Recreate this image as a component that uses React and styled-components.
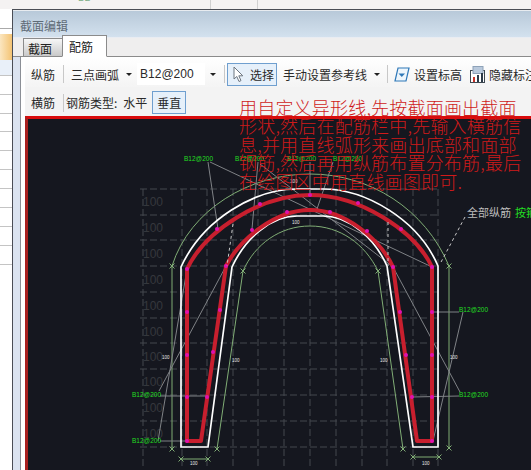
import React from 'react';
import styled, { createGlobalStyle } from 'styled-components';

const Global = createGlobalStyle`
  html, body { margin: 0; padding: 0; background: #fff; }
  body { font-family: "Noto Sans CJK SC", "Liberation Sans", sans-serif; }
  * { box-sizing: border-box; }
`;

const Desktop = styled.div`
  width: 531px; height: 470px; overflow: hidden; position: relative;
  display: flex; flex-direction: column; background: #fff;
`;
const TopStrip = styled.div`
  height: 9px; flex: none; display: flex; background: #f4f2f2; overflow: hidden;
`;
const TopCell = styled.div`
  width: ${p => p.$w}px; height: 9px; border-right: 1px solid ${p => p.$line || 'transparent'};
  font: 10px/1 "Liberation Sans", sans-serif; color: #7cae86; padding-left: ${p => p.$pad || 0}px;
  span { display: block; margin-top: -7px; }
`;
const Main = styled.div`flex: 1; display: flex; min-height: 0;`;
const Sheet = styled.div`width: 12px; flex: none; display: flex; flex-direction: column; background: #fff;`;
const SheetRow = styled.div`
  height: ${p => p.$h}px; flex: none; background: ${p => p.$bg || '#fff'};
  border-bottom: 1px solid ${p => p.$line || 'transparent'};
`;
const Win = styled.div`
  flex: 1; min-width: 0; display: flex; flex-direction: column;
  border-left: 1px solid #4a4d55; border-top: 1px solid #4a4d55; background: #dbe3f0;
`;
const TitleBar = styled.div`
  height: 27px; flex: none; padding: 3px 0 0 7px; border-top: 1px solid #e8ecf0;
  background: linear-gradient(#b8c9d9, #d3e1ee);
  font-size: 12px; line-height: 23px; color: #5f6b76;
`;
const TabStrip = styled.div`
  height: 20px; flex: none; display: flex; align-items: flex-end; padding-left: 10px; position: relative;
  background: #efeeee; border-bottom: 1px solid #8b8b8b; border-top: 1px solid #e9ecf2;
`;
const Tab = styled.div`
  height: ${p => p.$active ? 22 : 18}px; width: ${p => p.$active ? 45 : 39}px;
  margin-bottom: ${p => p.$active ? -1 : 0}px;
  padding-left: ${p => p.$active ? 6 : 4}px;
  border: 1px solid #8b8b8b; border-bottom: ${p => p.$active ? '1px solid #fff' : '0'};
  border-right: ${p => p.$active ? '1px solid #8b8b8b' : '0'};
  background: ${p => p.$active ? '#fff' : 'linear-gradient(#f7f7f7, #c9c9c9)'};
  font-size: 12px; line-height: ${p => p.$active ? 21 : 20}px; color: #222;
`;
const Body = styled.div`flex: 1; min-height: 0; display: flex; padding-left: 7px;`;
const Panel = styled.div`
  flex: 1; min-width: 0; display: flex; flex-direction: column;
  border-left: 1px solid #8b8f96; padding-left: 4px; background: #fff;
`;
const ToolRow = styled.div`
  height: ${p => p.$h}px; flex: none; display: flex; align-items: center;
  padding: ${p => p.$top}px 0 0 6px;
  white-space: nowrap; overflow: hidden;
  background: ${p => p.$bg};
  font-size: 12px; color: #2a2a2a;
`;
const Label = styled.span`margin-left: ${p => p.$ml || 0}px; flex: none;`;
const Sep = styled.i`
  width: 1px; height: 18px; flex: none; background: #c8c8c8; margin-left: ${p => p.$ml || 0}px;
`;
const Caret = styled.i`
  width: 0; height: 0; flex: none; margin-left: ${p => p.$ml || 0}px;
  border: 3px solid transparent; border-top: 3px solid #222; border-bottom: 0;
`;
const Field = styled.div`
  width: 68px; height: 22px; flex: none; margin-left: ${p => p.$ml || 0}px; padding-left: 3px;
  background: #fff; font: 12px/22px "Liberation Sans", sans-serif; color: #2a2a2a;
`;
const ToggleBtn = styled.div`
  height: 23px; width: ${p => p.$w}px; flex: none; margin-left: ${p => p.$ml || 0}px;
  display: flex; align-items: center; justify-content: ${p => p.$center ? 'center' : 'flex-start'};
  gap: 6px; padding-left: ${p => p.$center ? 0 : 5}px;
  border: 1px solid #6f9fcf; background: #e6f0fa;
`;
const Glyph = styled.svg`flex: none; display: block; margin-left: ${p => p.$ml || 0}px;`;
const Canvas = styled.div`
  flex: 1; min-height: 0; position: relative; overflow: hidden; background: #15171f;
  border-top: 3px solid #d80c0c; border-left: 3px solid #a82020;
`;
const Drawing = styled.svg`display: block;`;
const Note = styled.div`
  position: absolute; left: 239px; top: 98px; z-index: 2; pointer-events: none;
  font-size: 18px; font-weight: 300; line-height: 18.4px; color: #cf1a1a; white-space: nowrap; letter-spacing: .2px;
`;
const NoteLine = styled.div`height: 18.4px;`;

const outer = 'M181 448V268C203 220 255 190 297 190H323C365 190 418 220 438 267V448H413L387 267C375 240 350 217 323 217H297C270 217 245 240 232 268L208 448Z';
const rebar = 'M187 442V270C205 232 260 196 310 196C360 196 415 232 432 268V442H417L393 268C380 240 345 211 310 211C275 211 240 240 226 267L201 442Z';
const dots = [[187,270],[217,230],[260,205],[310,196],[358,204],[401,230],[432,268],[432,313],[432,356],[432,398],[432,442],[412,398],[406,356],[400,313],[393,268],[367,232],[330,213],[287,213],[252,231],[226,267],[220,311],[213,353],[207,398],[187,442],[187,398],[187,356],[187,313]];
const hLines = [190,216,241,267,293,319,344,370,396,422,448];
const vLines = [143,182,207,233,258,284,310,336,362,387,413,438];
const faint = [203,229,255,281,307,333,358,383,409,435];
const leaders = [
  [208,163,218,230],[210,163,432,268],[258,163,252,230],[260,165,393,268],[393,268,460,393],
  [310,163,310,196],[333,163,317,210],[159,392,226,267],[160,397,207,397],[158,442,187,270],
  [160,442,187,442],[431,313,459,313],[412,398,459,397],[463,313,433,442],
];
const labels = [[184,162],[235,162],[287,162],[333,162],[132,398],[132,444],[459,313],[459,398]];
const dims = [[290,184],[292,225],[162,360],[232,363],[380,363],[450,360],[190,466],[422,466]];
const ticks = [[172,267],[172,450],[449,267],[449,449],[243,272],[217,450],[378,272],[403,450],[181,460],[208,460],[413,458],[439,458]];

const Cad = () => (
  <Drawing width="503" height="350" viewBox="28 120 503 350">
    <g stroke="#45484e" strokeWidth="1" strokeDasharray="7 3">
      {hLines.map(y => <line key={y} x1="140" x2="440" y1={y} y2={y} />)}
      {vLines.map(x => <line key={x} x1={x} x2={x} y1="190" y2="470" />)}
    </g>
    <g fill="#35383d" fontFamily="Liberation Sans, sans-serif" fontSize="12">
      {faint.map(y => <text key={y} x="143" y={y + 4}>100</text>)}
    </g>
    <g fill="none" stroke="#80ad75" strokeWidth="1">
      <path d="M172 450V267C190 210 250 175 310 175C370 175 425 210 449 267V449" />
      <path d="M217 450L243 272C255 245 280 227 310 227C340 227 365 245 378 272L403 450" />
      <path d="M181 460H208M413 458H439" />
      {ticks.map(([x, y]) => <path key={`${x}-${y}`} d={`M${x - 2.5} ${y + 2.5}L${x + 2.5} ${y - 2.5}M${x - 2.5} ${y - 2.5}L${x + 2.5} ${y + 2.5}`} />)}
    </g>
    <g stroke="#7f8286" strokeWidth="1">
      {leaders.map(([a, b, c, d]) => <line key={`${a}-${b}-${c}`} x1={a} y1={b} x2={c} y2={d} />)}
    </g>
    <path d={outer} fill="none" stroke="#fff" strokeWidth="1.7" />
    <path d={rebar} fill="none" stroke="#c81f2e" strokeWidth="4" strokeLinejoin="round" />
    <g fill="#e010b0">
      {dots.map(([x, y]) => <circle key={`${x}-${y}`} cx={x} cy={y} r="2" />)}
    </g>
    <g stroke="#c8c8c8" strokeWidth="1" strokeDasharray="3 3">
      <line x1="465" y1="218" x2="440" y2="265" />
      <line x1="388" y1="223" x2="388" y2="267" />
      <line x1="233" y1="225" x2="227" y2="267" />
    </g>
    <g fill="#22dd22" fontFamily="Liberation Sans, sans-serif" fontSize="6.5">
      {labels.map(([x, y]) => <text key={`${x}-${y}`} x={x} y={y}>B12@200</text>)}
    </g>
    <g fill="#e8e8e8" fontFamily="Liberation Sans, sans-serif" fontSize="4.5">
      {dims.map(([x, y]) => <text key={`${x}-${y}`} x={x} y={y}>100</text>)}
    </g>
    <text x="467" y="218" fontSize="11" fill="#bdbdbd" fontFamily="Noto Sans CJK SC, sans-serif">全部纵筋
      <tspan fill="#22dd22" dx="4">按箍筋</tspan>
    </text>
  </Drawing>
);

const Pointer = () => (
  <Glyph width="11" height="17" viewBox="0 0 11 17">
    <path d="M1 1V13L3.8 10.5L6 15.5L8 14.6L5.8 9.8H9.8Z" fill="#fff" stroke="#6d7680" strokeWidth="1" />
  </Glyph>
);
const ElevIcon = () => (
  <Glyph width="16" height="15" viewBox="0 0 16 15" $ml={6}>
    <path d="M4 1H15L12 14H1Z" fill="#eef6fc" stroke="#2f78b8" strokeWidth="1.2" />
    <path d="M4.5 6.5H11L7.8 10Z" fill="#2f78b8" />
  </Glyph>
);
const HideIcon = () => (
  <Glyph width="17" height="17" viewBox="0 0 17 17" $ml={7}>
    <rect x="1.5" y="4.5" width="14" height="12" fill="#fff" stroke="#3e4850" />
    <rect x="4" y="0.5" width="10" height="7" fill="#b9c9dc" stroke="#8ea2b8" />
    <rect x="4" y="11" width="2" height="5" fill="#c8352c" />
    <rect x="8" y="9" width="2" height="7" fill="#2b3a48" />
    <rect x="12" y="7" width="2" height="9" fill="#2b3a48" />
  </Glyph>
);

export default function App() {
  return (
    <Desktop>
      <Global />
      <TopStrip>
        <TopCell $w={211} $line="#d0d0d0" $pad={78}><span>B2</span></TopCell>
        <TopCell $w={47} $line="#d0d0d0" />
      </TopStrip>
      <Main>
        <Sheet>
          <SheetRow $h={20} $line="#aaa" />
          <SheetRow $h={5} />
          <SheetRow $h={26} $bg="linear-gradient(90deg,#fbe6c0,#f4c474)" />
          <SheetRow $h={16} $bg="#e9f0f9" $line="#c4c4c4" />
          {[19, 19, 18, 19, 19, 19, 19, 19, 19, 19].map((h, i) => <SheetRow key={i} $h={h} $line="#c4c4c4" />)}
        </Sheet>
        <Win>
          <TitleBar>截面编辑</TitleBar>
          <TabStrip>
            <Tab>截面</Tab>
            <Tab $active>配筋</Tab>
          </TabStrip>
          <Body>
            <Panel>
              <ToolRow $h={30} $top={4} $bg="linear-gradient(#fff,#f4f4f4)">
                <Label>纵筋</Label>
                <Sep $ml={8} />
                <Label $ml={7}>三点画弧</Label>
                <Caret $ml={7} />
                <Field $ml={5}>B12@200</Field>
                <Caret $ml={5} />
                <Sep $ml={8} />
                <ToggleBtn $w={50} $ml={2}><Pointer /><span>选择</span></ToggleBtn>
                <Label $ml={6}>手动设置参考线</Label>
                <Caret $ml={7} />
                <Sep $ml={7} />
                <ElevIcon />
                <Label $ml={4}>设置标高</Label>
                <HideIcon />
                <Label $ml={3}>隐藏标注</Label>
              </ToolRow>
              <ToolRow $h={29} $top={2} $bg="#f3f3f3">
                <Label>横筋</Label>
                <Sep $ml={8} />
                <Label $ml={2}>钢筋类型:</Label>
                <Label $ml={6}>水平</Label>
                <ToggleBtn $w={34} $ml={5} $center><span>垂直</span></ToggleBtn>
              </ToolRow>
              <Canvas><Cad /></Canvas>
            </Panel>
          </Body>
        </Win>
      </Main>
      <Note>
        <NoteLine>用自定义异形线,先按截面画出截面</NoteLine>
        <NoteLine>形状,然后在配筋栏中,先输入横筋信</NoteLine>
        <NoteLine>息,并用直线弧形来画出底部和面部</NoteLine>
        <NoteLine>钢筋,然后再用纵筋布置分布筋,最后</NoteLine>
        <NoteLine>在绘图区中用直线画图即可.</NoteLine>
      </Note>
    </Desktop>
  );
}
